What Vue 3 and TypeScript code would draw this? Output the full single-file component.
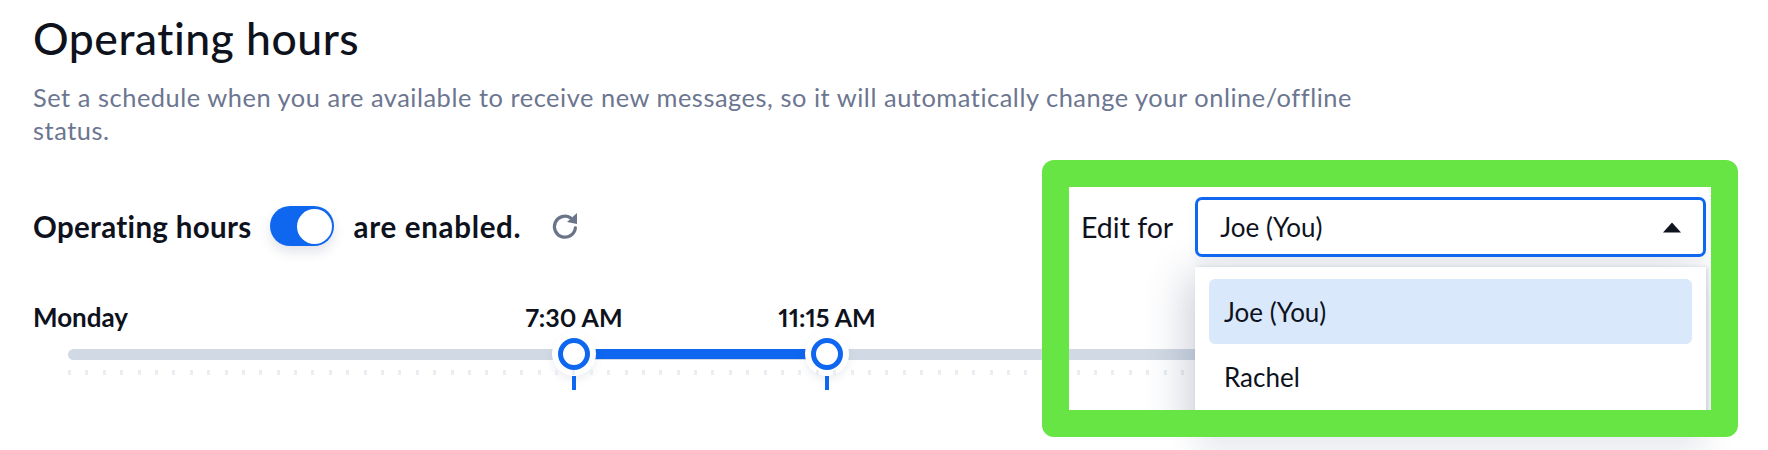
<script setup lang="ts">
const ticks: number[] = Array.from({ length: 65 }, (_, i) => i)
</script>

<template>
  <main class="page">
    <h1 class="title">Operating hours</h1>
    <p class="desc">Set a schedule when you are available to receive new messages, so it will automatically change your online/offline status.</p>
    <div class="status">
      <span class="status-a">Operating hours</span>
      <span class="toggle"><span class="knob"></span></span>
      <span class="status-b">are enabled.</span>
      <svg class="refresh" viewBox="0 0 24 24" fill="none">
        <path d="M20.3 13.5A8.4 8.4 0 1 1 16.5 5.5" stroke="#6b7489" stroke-width="2.6" stroke-linecap="round" />
        <path d="M21.6 1.6V10.4L13.6 8.8Z" fill="#6b7489" />
      </svg>
    </div>
    <div class="day">
      <div class="day-head">
        <span class="day-name">Monday</span>
        <span class="time time-a">7:30 AM</span>
        <span class="time time-b">11:15 AM</span>
      </div>
      <div class="slider">
        <div class="track"></div>
        <div class="range"></div>
        <span class="handle handle-a"></span>
        <span class="handle handle-b"></span>
        <div class="ticks"><i v-for="t in ticks" :key="t"></i></div>
        <span class="mark mark-a"></span>
        <span class="mark mark-b"></span>
      </div>
    </div>
    <section class="frame">
      <div class="editor">
        <span class="edit-label">Edit for</span>
        <div class="select">
          <span>Joe (You)</span>
          <svg class="caret" viewBox="0 0 18 10"><path d="M9 0 18 10H0Z" fill="#10141f" /></svg>
        </div>
      </div>
      <div class="menu">
        <div class="option selected">Joe (You)</div>
        <div class="option">Rachel</div>
      </div>
    </section>
    <div class="menu-shadow"></div>
  </main>
</template>

<style scoped>
.page {
  position: relative;
  width: 1768px;
  height: 450px;
  box-sizing: border-box;
  padding: 12px 0 0 33px;
  overflow: hidden;
  background: #fff;
  color: #0e121d;
  font-family: Lato, "Noto Sans", sans-serif;
  font-variant-numeric: proportional-nums;
}
.title {
  margin: 0;
  font-size: 44.5px;
  line-height: 52px;
  font-weight: 500;
  letter-spacing: 0.5px;
}
.desc {
  width: 1340px;
  margin: 17px 0 0;
  font-size: 25.4px;
  line-height: 33px;
  color: #6c7690;
  letter-spacing: 0.54px;
}
.status {
  display: flex;
  align-items: center;
  gap: 19px;
  margin-top: 59px;
  height: 40px;
  font-size: 29.5px;
  font-weight: 700;
}
.status-a {
  letter-spacing: 0.32px;
}
.status-b {
  letter-spacing: 0.7px;
}
.toggle {
  display: flex;
  justify-content: flex-end;
  align-items: center;
  box-sizing: border-box;
  width: 64px;
  height: 40px;
  padding-right: 2px;
  border-radius: 20px;
  background: #0f67f0;
  box-shadow: 0 6px 12px rgba(40, 60, 100, 0.14);
}
.knob {
  width: 35px;
  height: 35px;
  border-radius: 50%;
  background: #fff;
}
.refresh {
  width: 30px;
  height: 30px;
  margin-left: 10px;
}
.day {
  margin-top: 54px;
}
.day-head {
  position: relative;
  height: 40px;
  font-size: 26px;
  font-weight: 700;
  line-height: 34px;
}
.time {
  position: absolute;
  top: 0;
  transform: translateX(-50%);
  white-space: nowrap;
  font-size: 25px;
}
.time-a { left: 541px; }
.time-b { left: 794px; }
.slider {
  position: relative;
  height: 50px;
  margin-left: 35px;
  width: 1250px;
}
.track {
  position: absolute;
  left: 0;
  right: 0;
  top: 9px;
  height: 11px;
  border-radius: 6px;
  background: #d1dae4;
}
.range {
  position: absolute;
  left: 506px;
  top: 9px;
  width: 253px;
  height: 10px;
  background: #0f67f0;
}
.handle {
  position: absolute;
  top: -2px;
  box-sizing: border-box;
  width: 32px;
  height: 32px;
  border: 5px solid #0f67f0;
  border-radius: 50%;
  background: #fff;
  box-shadow: 0 0 0 6px #fff, 0 4px 10px 5px rgba(40, 60, 100, 0.1);
}
.handle-a { left: 490px; }
.handle-b { left: 743px; }
.ticks {
  position: absolute;
  left: 0;
  top: 30px;
  display: flex;
  gap: 14.4px;
}
.ticks i {
  display: block;
  width: 3px;
  height: 5px;
  background: #eaeef2;
}
.mark {
  position: absolute;
  top: 36px;
  width: 4px;
  height: 14px;
  background: #0f67f0;
}
.mark-a { left: 504px; }
.mark-b { left: 757px; }
.frame {
  position: absolute;
  left: 1042px;
  top: 160px;
  z-index: 2;
  box-sizing: border-box;
  width: 696px;
  height: 277px;
  border: 27px solid #66e545;
  border-radius: 12px;
  overflow: hidden;
}
.editor {
  display: flex;
  align-items: center;
  gap: 22px;
  height: 70px;
  padding: 10px 5px 0 12px;
  box-sizing: border-box;
  background: #fff;
  font-size: 28.5px;
}
.edit-label {
  white-space: nowrap;
}
.select {
  flex: 1;
  display: flex;
  align-items: center;
  justify-content: space-between;
  box-sizing: border-box;
  height: 60px;
  padding: 0 22px;
  border: 3px solid #0f67f0;
  border-radius: 7px;
  background: #fff;
  font-size: 26px;
  box-shadow: 0 6px 10px rgba(40, 60, 100, 0.06);
}
.caret {
  width: 18px;
  height: 11px;
}
.menu {
  margin: 10px 5px 0 126px;
  padding: 12px 14px;
  background: #fff;
  font-size: 26px;
  box-shadow: -8px 8px 40px rgba(40, 60, 100, 0.24), 2px 0 4px rgba(40, 60, 100, 0.16);
  height: 170px;
  box-sizing: border-box;
}
.option {
  height: 65px;
  display: flex;
  align-items: center;
  padding: 0 15px;
  border-radius: 6px;
}
.selected {
  background: #dae8fc;
}
.menu-shadow {
  position: absolute;
  left: 1195px;
  top: 420px;
  width: 511px;
  height: 17px;
  z-index: 1;
  box-shadow: 0 8px 30px rgba(40, 60, 100, 0.2);
}
</style>
